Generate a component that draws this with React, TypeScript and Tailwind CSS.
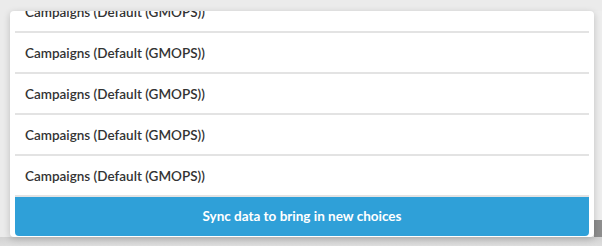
import React from "react";

const rows = Array.from({ length: 5 }, () => "Campaigns (Default (GMOPS))");

export default function App() {
  return (
    <div className="relative h-[246px] w-[602px] overflow-hidden bg-[#ebebeb] font-['Lato','Open_Sans',sans-serif]">
      {/* thing peeking out below the dropdown */}
      <div className="absolute left-[233px] top-[243px] h-[10px] w-[155px] rounded-t-[6px] bg-[#bcd5b0]" />
      <div className="absolute left-0 top-[237px] h-[9px] w-full bg-gradient-to-b from-[#d2d2d2] to-[#dedede]" />

      <div className="flex pt-[11px] pl-[10px]">
        <div className="relative z-10 flex h-[226px] w-[584px] flex-col overflow-hidden rounded-[4px] bg-white shadow-[0_2px_7px_rgba(0,0,0,0.2)]">
          <div className="flex-1 overflow-hidden px-[5px]">
            <ul className="-mt-[19px]">
              {rows.map((label, i) => (
                <li
                  key={i}
                  className="flex h-[41px] items-center border-b-2 border-[#e3e3e3] px-[10px] pt-[1px] text-[13.5px] font-semibold text-[#333333]"
                >
                  {label}
                </li>
              ))}
            </ul>
          </div>
          <div className="px-[5px] pb-[1px]">
            <button
              type="button"
              className="flex h-[39px] w-full items-center justify-center rounded-b-[4px] bg-[#2fa0d8] text-[13.5px] font-bold text-white"
            >
              Sync data to bring in new choices
            </button>
          </div>
        </div>
        {/* scrollbar strip */}
        <div className="flex h-[226px] w-[8px] flex-col justify-end bg-[#ededed]">
          <div className="h-[17px] w-full bg-[#8e8e8e]" />
        </div>
      </div>
    </div>
  );
}
